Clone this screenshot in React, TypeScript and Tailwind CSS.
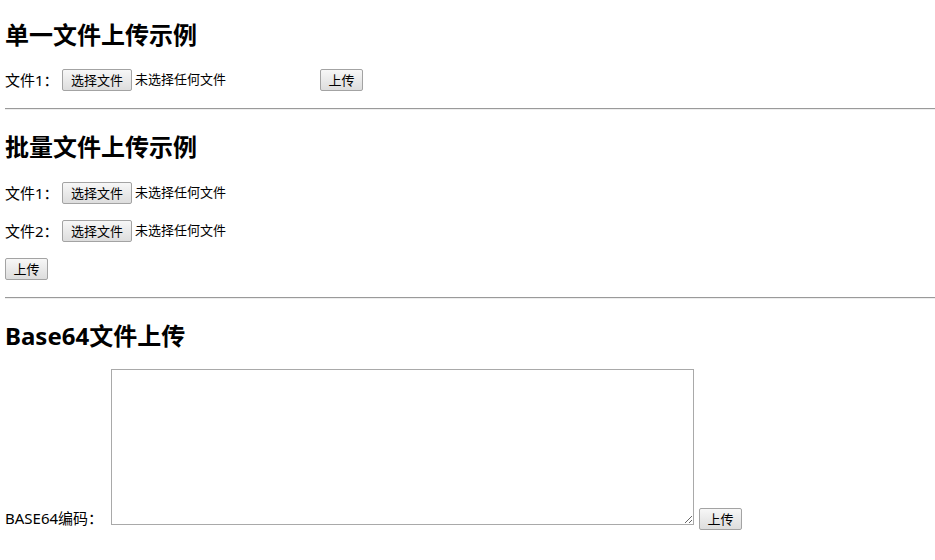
import React from 'react';

const font = { fontFamily: '"Noto Sans", "Noto Sans CJK SC", sans-serif' };

const Btn = ({ children, className = '' }: { children: React.ReactNode; className?: string }) => (
  <button
    type="button"
    className={`h-[22px] px-[7px] text-[13px] leading-[20px] text-black border border-[#a3a3a3] rounded-[2px] bg-gradient-to-b from-[#f7f7f7] to-[#dddddd] ${className}`}
  >
    {children}
  </button>
);

const FileInput = ({ wide = false }: { wide?: boolean }) => (
  <div className={`flex items-center ${wide ? 'w-[254px]' : ''}`}>
    <Btn className="w-[70px] px-0">选择文件</Btn>
    <span className="ml-[3px] text-[13px] text-black">未选择任何文件</span>
  </div>
);

const Heading = ({ children, className = '' }: { children: React.ReactNode; className?: string }) => (
  <h2 className={`text-[24px] font-bold leading-[32px] text-black ${className}`}>{children}</h2>
);

const Rule = ({ className = '' }: { className?: string }) => (
  <div className={`h-[2px] border-t border-[#9a9a9a] border-b border-b-[#eeeeee] ${className}`} />
);

export default function App() {
  return (
    <div className="min-h-screen bg-white pl-[5px] text-[15px] text-black" style={font}>
      <Heading className="pt-[19px]">单一文件上传示例</Heading>
      <div className="mt-[18px] flex items-center h-[22px]">
        <span className="w-[57px]">文件1：</span>
        <FileInput wide />
        <Btn className="ml-[4px] w-[43px] px-0">上传</Btn>
      </div>
      <Rule className="mt-[17px]" />

      <Heading className="mt-[21px]">批量文件上传示例</Heading>
      <div className="mt-[19px] flex items-center h-[22px]">
        <span className="w-[57px]">文件1：</span>
        <FileInput />
      </div>
      <div className="mt-[16px] flex items-center h-[22px]">
        <span className="w-[57px]">文件2：</span>
        <FileInput />
      </div>
      <div className="mt-[16px] flex">
        <Btn className="w-[43px] px-0">上传</Btn>
      </div>
      <Rule className="mt-[17px]" />

      <Heading className="mt-[21px]">Base64文件上传</Heading>
      <div className="mt-[17px] flex items-end">
        <span className="w-[106px] leading-[20px] -mb-[3px]">BASE64编码：</span>
        <textarea className="w-[583px] h-[156px] border border-[#a9a9a9] bg-white resize" />
        <Btn className="ml-[5px] w-[43px] px-0 -mb-[5px]">上传</Btn>
      </div>
    </div>
  );
}
